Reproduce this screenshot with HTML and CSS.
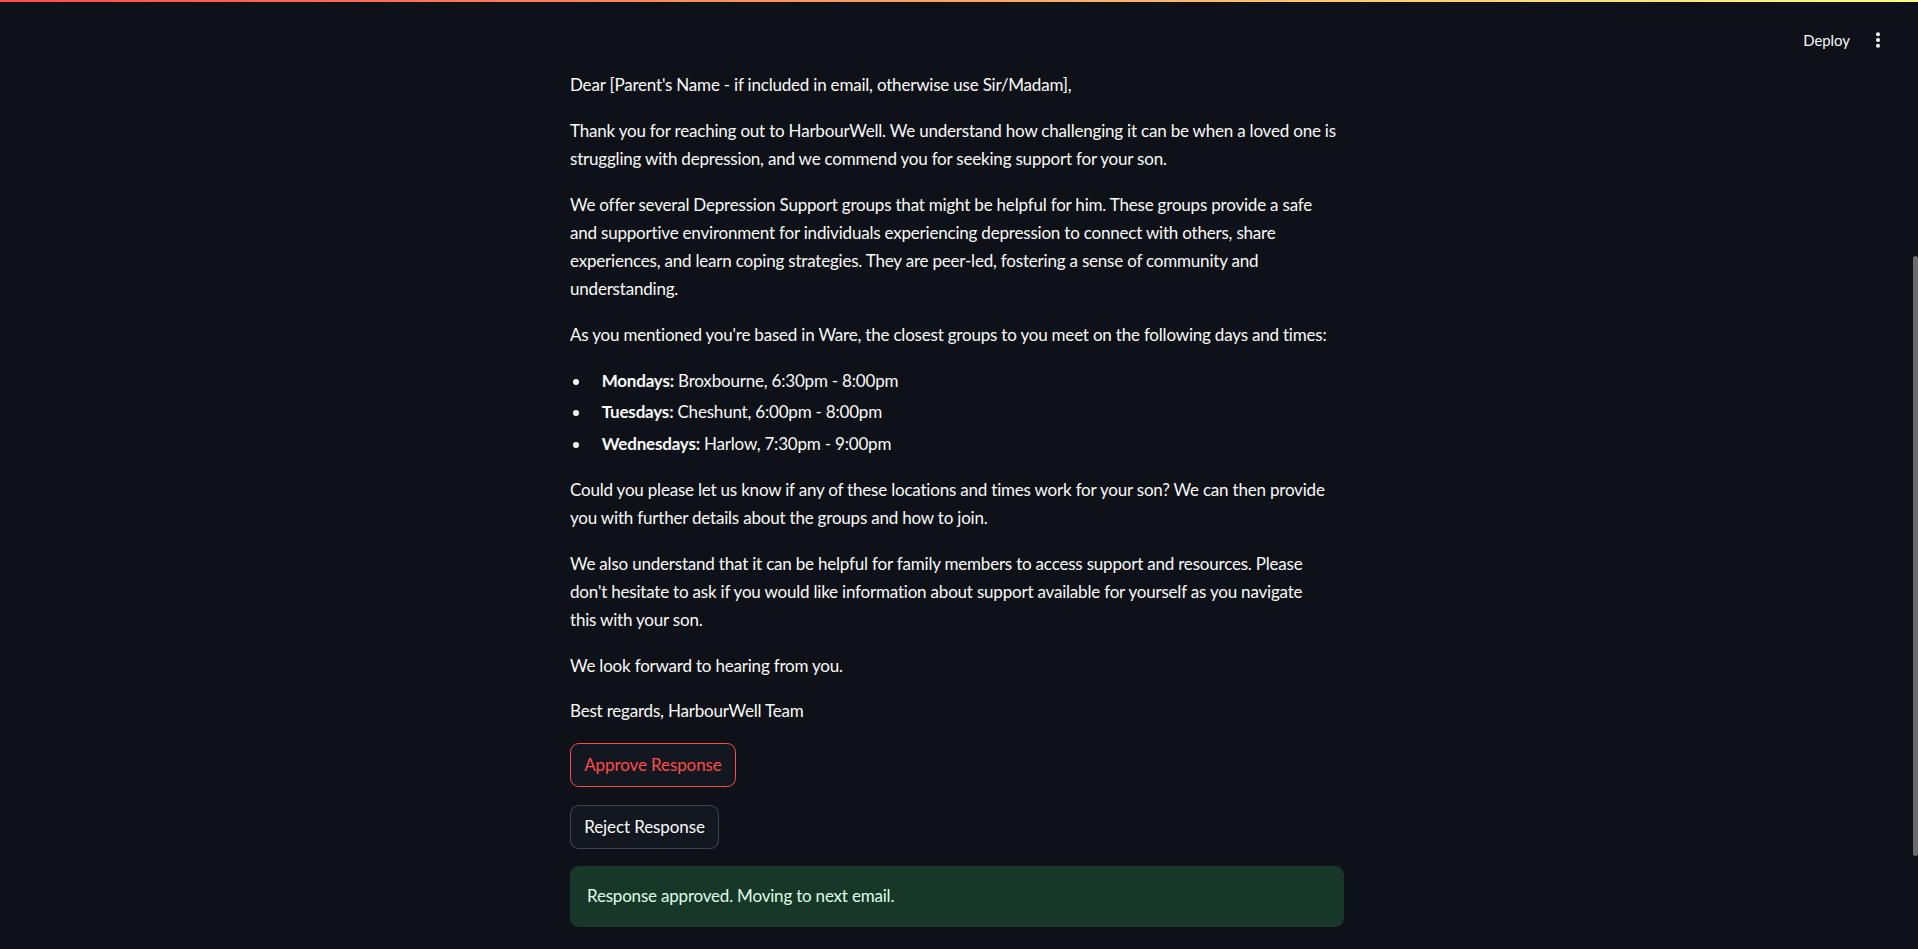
FILE: index.html
```html
<!DOCTYPE html>
<html lang="en">
<head>
<meta charset="utf-8">
<title>HarbourWell</title>
<link rel="stylesheet" href="styles.css">
</head>
<body>
<div class="app">
  <header class="header">
    <div class="decoration"></div>
    <div class="toolbar">
      <button class="deploy">Deploy</button>
      <button class="menu" aria-label="Main menu">
        <svg width="16" height="18" viewBox="0 0 16 18"><circle cx="8" cy="3.3" r="2" fill="#fafafa"/><circle cx="8" cy="9" r="2" fill="#fafafa"/><circle cx="8" cy="14.7" r="2" fill="#fafafa"/></svg>
      </button>
    </div>
  </header>
  <main class="main">
    <div class="block">
      <div class="markdown">
        <p>Dear [Parent's Name - if included in email, otherwise use Sir/Madam],</p>
        <p>Thank you for reaching out to HarbourWell. We understand how challenging it can be when a loved one is struggling with depression, and we commend you for seeking support for your son.</p>
        <p>We offer several Depression Support groups that might be helpful for him. These groups provide a safe<br>and supportive environment for individuals experiencing depression to connect with others, share<br>experiences, and learn coping strategies. They are peer-led, fostering a sense of community and<br>understanding.</p>
        <p>As you mentioned you're based in Ware, the closest groups to you meet on the following days and times:</p>
        <ul>
          <li><strong>Mondays:</strong> Broxbourne, 6:30pm - 8:00pm</li>
          <li><strong>Tuesdays:</strong> Cheshunt, 6:00pm - 8:00pm</li>
          <li><strong>Wednesdays:</strong> Harlow, 7:30pm - 9:00pm</li>
        </ul>
        <p>Could you please let us know if any of these locations and times work for your son? We can then provide you with further details about the groups and how to join.</p>
        <p>We also understand that it can be helpful for family members to access support and resources. Please<br>don't hesitate to ask if you would like information about support available for yourself as you navigate<br>this with your son.</p>
        <p>We look forward to hearing from you.</p>
        <p>Best regards, HarbourWell Team</p>
      </div>
      <div class="row"><button class="btn btn-focus">Approve Response</button></div>
      <div class="row"><button class="btn">Reject Response</button></div>
      <div class="alert">Response approved. Moving to next email.</div>
    </div>
  </main>
  <div class="scroll-thumb"></div>
</div>
</body>
</html>
```
FILE: styles.css
```css
html, body {
  margin: 0;
  padding: 0;
  background: #0e1117;
  height: 949px;
  overflow: hidden;
}
.app {
  position: relative;
  height: 949px;
  font-family: Lato, "Noto Sans", sans-serif;
  color: #fafafa;
  font-size: 17px;
  line-height: 28.16px;
  letter-spacing: -0.2px;
}
.decoration {
  height: 2px;
  background: linear-gradient(90deg, rgb(255, 75, 75), rgb(255, 253, 128));
}
.toolbar {
  display: flex;
  justify-content: flex-end;
  align-items: center;
  height: 32px;
  padding: 22px 26px 15px 0;
  gap: 14px;
}
.deploy {
  background: transparent;
  border: none;
  color: #fafafa;
  font-family: Lato, "Noto Sans", sans-serif;
  font-size: 14.9px;
  letter-spacing: 0;
  padding: 0;
  height: 32px;
  line-height: 32px;
}
.menu {
  background: transparent;
  border: none;
  width: 28px;
  height: 32px;
  padding: 0;
  display: flex;
  align-items: center;
  justify-content: center;
}
.main {
  padding-right: 4px;
}
.block {
  width: 774px;
  margin: 0 auto;
  display: flex;
  flex-direction: column;
  gap: 17.6px;
}
.markdown p {
  margin: 0 0 17.6px 0;
}
.markdown p:last-child {
  margin-bottom: 0;
}
.markdown ul {
  margin: 0 0 17.6px 0;
  padding: 0;
}
.markdown li {
  margin: 3.52px 0 3.52px 21.1px;
  padding-left: 10.6px;
}
.markdown strong {
  font-weight: 700;
}
.row {
  display: flex;
}
.btn {
  font-family: Lato, "Noto Sans", sans-serif;
  font-size: 17px;
  line-height: 28.16px;
  letter-spacing: -0.1px;
  color: #fafafa;
  background: #131720;
  border: 1px solid rgba(250, 250, 250, 0.2);
  border-radius: 8.8px;
  min-height: 44px;
  padding: 4.4px 13.2px;
}
.btn-focus {
  color: rgb(255, 75, 75);
  border-color: rgb(255, 75, 75);
}
.alert {
  background: rgb(23, 56, 40);
  color: rgb(223, 253, 233);
  border-radius: 8.8px;
  padding: 16px 17px;
}
.scroll-thumb {
  position: absolute;
  right: 0;
  top: 256px;
  width: 5px;
  height: 600px;
  border-radius: 3px;
  background: #6b6b6e;
}
```
